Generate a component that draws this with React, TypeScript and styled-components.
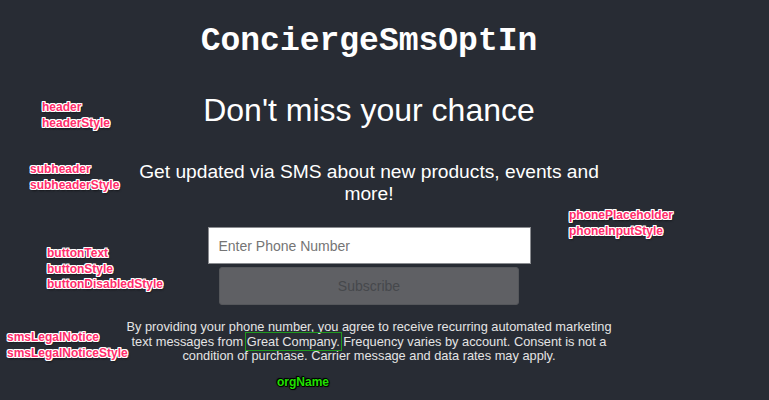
import React from 'react'
import styled, { createGlobalStyle } from 'styled-components'

const GlobalStyle = createGlobalStyle`
  html, body {
    margin: 0;
    padding: 0;
    background-color: #282c34;
  }
  body {
    font-family: 'Liberation Sans', Arial, sans-serif;
    color: #ffffff;
  }
`

const Page = styled.div`
  position: relative;
  width: 769px;
  height: 400px;
  overflow: hidden;
  background-color: #282c34;
`

const Column = styled.main`
  display: flex;
  flex-direction: column;
  align-items: center;
  padding: 23px 31px 0 0;
`

const Title = styled.h1`
  margin: 0;
  font-family: 'Liberation Mono', 'Courier New', monospace;
  font-weight: 700;
  font-size: 33px;
  line-height: 38px;
`

const Header = styled.h2`
  margin: 31px 0 0;
  font-weight: 400;
  font-size: 32px;
  line-height: 37px;
`

const Subheader = styled.p`
  margin: 32px 0 0;
  width: 470px;
  text-align: center;
  font-size: 19.2px;
  line-height: 22px;
`

const PhoneInput = styled.input`
  box-sizing: border-box;
  margin-top: 22px;
  width: 323px;
  height: 37px;
  padding: 0 10px;
  border: 1px solid #8a8c90;
  background: #ffffff;
  font-family: 'Liberation Sans', Arial, sans-serif;
  font-size: 14px;
  color: #222;
  outline: none;

  &::placeholder {
    color: #757575;
  }
`

const SubscribeButton = styled.button`
  box-sizing: border-box;
  margin-top: 3px;
  width: 300px;
  height: 38px;
  border: 1px solid #55575b;
  border-radius: 3px;
  background-color: #5f6064;
  color: #46484c;
  font-family: 'Liberation Sans', Arial, sans-serif;
  font-size: 14px;
  cursor: not-allowed;
`

const LegalNotice = styled.p`
  margin: 15px 0 0;
  width: 500px;
  text-align: center;
  font-size: 12.8px;
  line-height: 14.5px;
  color: #e4e4e4;
`

const OrgName = styled.span`
  outline: 1px solid #1f9a1f;
  outline-offset: 1px;
`

const Annotation = styled.div<{ $tone?: 'pink' | 'green'; $left: number; $top: number }>`
  position: absolute;
  left: ${p => p.$left}px;
  top: ${p => p.$top}px;
  font-family: 'Liberation Sans', Arial, sans-serif;
  font-weight: 700;
  font-size: 12px;
  line-height: 15.5px;
  white-space: nowrap;
  color: ${p => (p.$tone === 'green' ? '#22e000' : '#ff2d6b')};
  text-shadow: ${p =>
    p.$tone === 'green'
      ? '1px 0 0 #000, -1px 0 0 #000, 0 1px 0 #000, 0 -1px 0 #000, 1px 1px 1px #000, -1px -1px 1px #000'
      : '1px 0 0 #fff, -1px 0 0 #fff, 0 1px 0 #fff, 0 -1px 0 #fff, 1px 1px 0 #fff, -1px -1px 0 #fff, 1px -1px 0 #fff, -1px 1px 0 #fff, 1px 2px 2px rgba(0,0,0,0.6)'};
`

const annotations: { left: number; top: number; lines: string[]; tone?: 'pink' | 'green' }[] = [
  { left: 42, top: 100, lines: ['header', 'headerStyle'] },
  { left: 30, top: 162, lines: ['subheader', 'subheaderStyle'] },
  { left: 569, top: 208, lines: ['phonePlaceholder', 'phoneInputStyle'] },
  { left: 47, top: 246, lines: ['buttonText', 'buttonStyle', 'buttonDisabledStyle'] },
  { left: 7, top: 330, lines: ['smsLegalNotice', 'smsLegalNoticeStyle'] },
  { left: 277, top: 375, lines: ['orgName'], tone: 'green' },
]

export default function App() {
  return (
    <Page>
      <GlobalStyle />
      <Column>
        <Title>ConciergeSmsOptIn</Title>
        <Header>Don't miss your chance</Header>
        <Subheader>Get updated via SMS about new products, events and more!</Subheader>
        <PhoneInput type="tel" placeholder="Enter Phone Number" />
        <SubscribeButton disabled>Subscribe</SubscribeButton>
        <LegalNotice>
          By providing your phone number, you agree to receive recurring automated marketing
          text messages from <OrgName>Great Company.</OrgName> Frequency varies by account.
          Consent is not a condition of purchase. Carrier message and data rates may apply.
        </LegalNotice>
      </Column>
      {annotations.map(a => (
        <Annotation key={a.lines[0]} $left={a.left} $top={a.top} $tone={a.tone}>
          {a.lines.map(l => (
            <div key={l}>{l}</div>
          ))}
        </Annotation>
      ))}
    </Page>
  )
}
